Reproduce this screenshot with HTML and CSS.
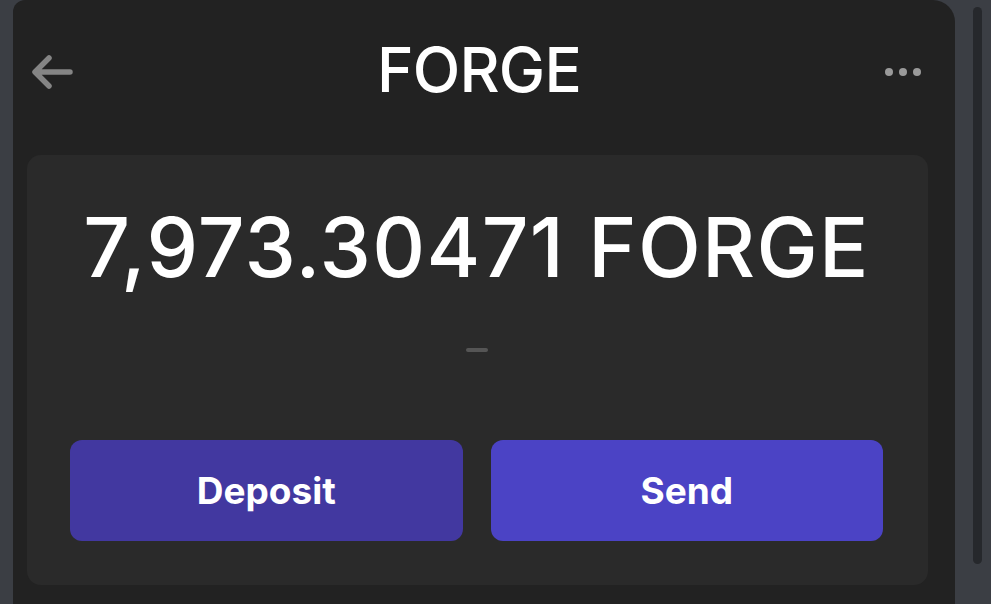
FILE: index.html
```html
<!DOCTYPE html>
<html lang="en">
<head>
    <meta charset="UTF-8">
    <meta name="viewport" content="width=device-width, initial-scale=1.0">
    <title>FORGE</title>
    <link rel="stylesheet" href="styles.css">
</head>
<body>

<div class="frame">
    <div class="edge"></div>

    <div class="wallet">
        <div class="top-bar">
            <button class="icon-btn back" aria-label="Back">
                <svg width="42" height="36" viewBox="0 0 42 36">
                    <path d="M39 18H5M18 4L4 18l14 14" fill="none" stroke="#858585" stroke-width="5.5" stroke-linecap="round" stroke-linejoin="round"/>
                </svg>
            </button>
            <h1 class="title">FORGE</h1>
            <button class="icon-btn more" aria-label="More">
                <span class="dot"></span><span class="dot"></span><span class="dot"></span>
            </button>
        </div>

        <div class="balance-card">
            <div class="amount">7,973.30471 FORGE</div>
            <div class="fiat"></div>
            <div class="actions">
                <button class="btn btn-deposit">Deposit</button>
                <button class="btn btn-send">Send</button>
            </div>
        </div>
    </div>

    <div class="scroll-track">
        <div class="scroll-thumb"></div>
    </div>
</div>

</body>
</html>
```

FILE: styles.css
```css
body {
    margin: 0;
    background-color: #3b3e44;
    font-family: Inter, "Noto Sans", Arial, sans-serif;
    color: #fff;
    overflow: hidden;
}
.frame {
    display: flex;
    height: 604px;
}
.edge {
    width: 13px;
    flex-shrink: 0;
}
.wallet {
    width: 942px;
    flex-shrink: 0;
    background-color: #222222;
    border-radius: 12px 22px 0 0;
    padding: 0 27px 0 14px;
    box-sizing: border-box;
}
.top-bar {
    height: 140px;
    margin-bottom: 15px;
    display: flex;
    align-items: center;
    justify-content: space-between;
}
.icon-btn {
    background: none;
    border: none;
    padding: 0;
    cursor: pointer;
    display: flex;
    align-items: center;
}
.back {
    margin-left: 4px;
    margin-top: 3px;
}
.title {
    margin: 0;
    font-size: 62px;
    font-weight: 500;
    line-height: 1;
    letter-spacing: -0.8px;
}
.more {
    gap: 6px;
    margin-right: 7px;
    margin-top: 3px;
}
.dot {
    width: 8px;
    height: 8px;
    border-radius: 50%;
    background-color: #9a9a9a;
}
.balance-card {
    background-color: #2a2a2a;
    border-radius: 14px;
    height: 430px;
    padding: 52px 45px 0 43px;
    box-sizing: border-box;
    display: flex;
    flex-direction: column;
    align-items: center;
}
.amount {
    font-size: 82px;
    font-weight: 500;
    line-height: 1;
    letter-spacing: 1.3px;
}
.fiat {
    width: 22px;
    height: 4px;
    border-radius: 2px;
    background-color: #555;
    margin-top: 59px;
}
.actions {
    margin-top: 88px;
    width: 100%;
    display: flex;
    gap: 28px;
}
.btn {
    flex: 1;
    height: 101px;
    border: none;
    border-radius: 12px;
    color: #fff;
    font-family: inherit;
    font-size: 37px;
    font-weight: 700;
    cursor: pointer;
}
.btn-deposit {
    background-color: #4238a0;
}
.btn-send {
    background-color: #4b43c5;
}
.scroll-track {
    flex: 1;
    padding: 7px 0 0 18px;
}
.scroll-thumb {
    width: 9px;
    height: 557px;
    border-radius: 5px;
    background-color: #26282c;
}
```
